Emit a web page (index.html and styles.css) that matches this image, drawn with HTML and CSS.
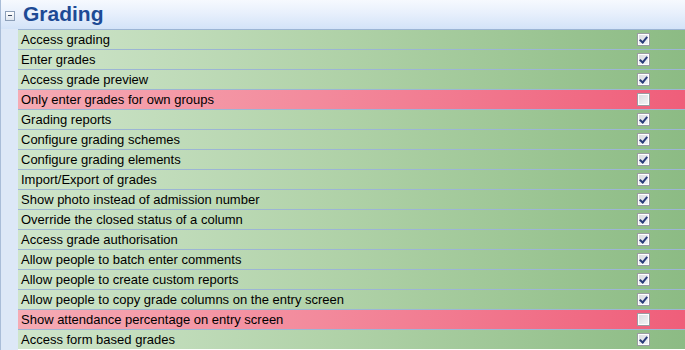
FILE: index.html
```html
<!DOCTYPE html>
<html>
<head>
<meta charset="utf-8">
<link rel="stylesheet" href="styles.css">
</head>
<body>
<div class="panel">
  <div class="header">
    <span class="toggle"><span class="minus"></span></span>
    <h1 class="title">Grading</h1>
  </div>
  <div class="content">
    <div class="gutter"></div>
    <div class="rows">
      <div class="row"><span class="label">Access grading</span><span class="cb checked"></span></div>
      <div class="row"><span class="label">Enter grades</span><span class="cb checked"></span></div>
      <div class="row"><span class="label">Access grade preview</span><span class="cb checked"></span></div>
      <div class="row off"><span class="label">Only enter grades for own groups</span><span class="cb"></span></div>
      <div class="row"><span class="label">Grading reports</span><span class="cb checked"></span></div>
      <div class="row"><span class="label">Configure grading schemes</span><span class="cb checked"></span></div>
      <div class="row"><span class="label">Configure grading elements</span><span class="cb checked"></span></div>
      <div class="row"><span class="label">Import/Export of grades</span><span class="cb checked"></span></div>
      <div class="row"><span class="label">Show photo instead of admission number</span><span class="cb checked"></span></div>
      <div class="row"><span class="label">Override the closed status of a column</span><span class="cb checked"></span></div>
      <div class="row"><span class="label">Access grade authorisation</span><span class="cb checked"></span></div>
      <div class="row"><span class="label">Allow people to batch enter comments</span><span class="cb checked"></span></div>
      <div class="row"><span class="label">Allow people to create custom reports</span><span class="cb checked"></span></div>
      <div class="row"><span class="label">Allow people to copy grade columns on the entry screen</span><span class="cb checked"></span></div>
      <div class="row off"><span class="label">Show attendance percentage on entry screen</span><span class="cb"></span></div>
      <div class="row"><span class="label">Access form based grades</span><span class="cb checked"></span></div>
    </div>
  </div>
</div>
</body>
</html>
```
FILE: styles.css
```css
html, body { margin: 0; padding: 0; }
body { width: 685px; height: 350px; overflow: hidden; font-family: "Liberation Sans", Arial, sans-serif; }
.panel { display: flex; flex-direction: column; width: 685px; height: 350px; }
.header {
  height: 29px;
  display: flex;
  align-items: center;
  background: linear-gradient(to bottom, #f6f9fe 0%, #e8f0fc 45%, #d3e3f8 100%);
  border-left: 1px solid #a9bdd8;
  box-sizing: border-box;
}
.toggle {
  width: 10px; height: 10px;
  margin-left: 4px; margin-right: 8px;
  margin-top: 2px;
  border: 1px solid #8c9fb8;
  background: linear-gradient(#ffffff, #dfe6ef);
  display: flex; align-items: center; justify-content: center;
  box-sizing: border-box;
}
.minus { width: 4px; height: 1px; background: #3a4a63; }
.title {
  margin: 0;
  font-size: 21px;
  font-weight: bold;
  color: #1d4a95;
  line-height: 29px;
  padding-bottom: 2px;
}
.content { display: flex; flex: 1; }
.gutter {
  width: 18px;
  background: #dde8f7;
  border-left: 1px solid #a9bdd8;
  box-sizing: border-box;
}
.rows { flex: 1; display: flex; flex-direction: column; }
.row {
  height: 20px;
  box-sizing: border-box;
  border-top: 1px solid #9cb5d4;
  display: flex; align-items: center;
  background: linear-gradient(to right, #cfe5cb 0%, #b2d3aa 45%, #8cbb84 100%);
}
.row.off {
  background: linear-gradient(to right, #f5abb4 0%, #f38a9c 45%, #ef5e7a 100%);
}
.label {
  flex: 1;
  font-size: 13px;
  color: #000;
  padding-left: 3px;
  white-space: nowrap;
}
.cb {
  width: 13px; height: 13px;
  margin-right: 35px;
  box-sizing: border-box;
  border: 1px solid #9a9ca3;
  background: linear-gradient(135deg, #d8dbe0 0%, #f4f5f7 100%);
  box-shadow: inset 0 0 0 1px #ffffff;
  position: relative;
}
.cb.checked::after {
  content: "";
  position: absolute;
  left: 3px; top: 1px;
  width: 3px; height: 6px;
  border-right: 2px solid #2a3d7a;
  border-bottom: 2px solid #2a3d7a;
  transform: rotate(40deg);
}
```
